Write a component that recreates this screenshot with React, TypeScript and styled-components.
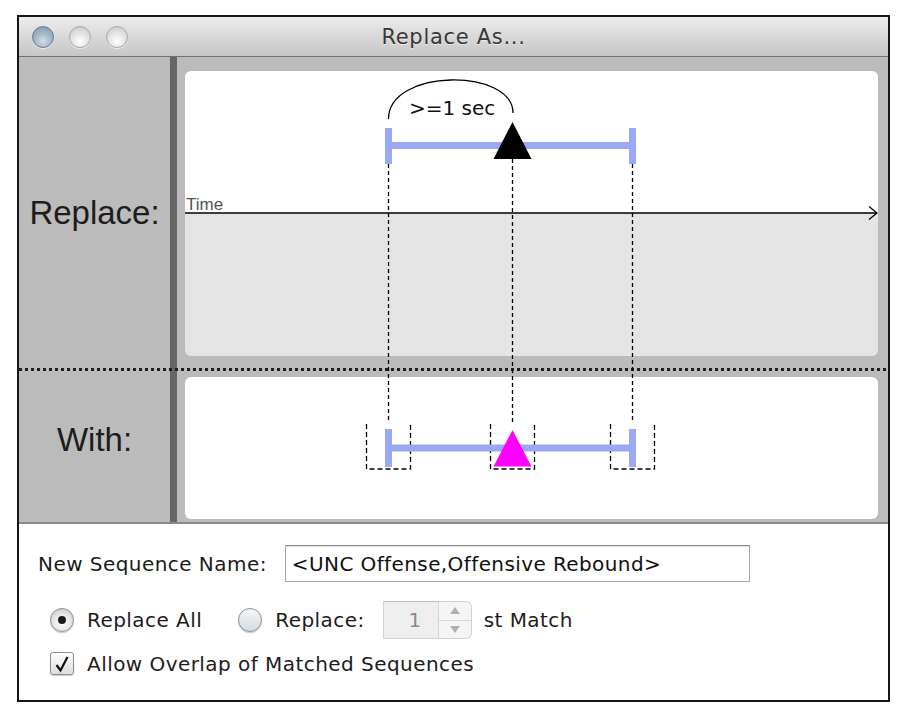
import styled, { createGlobalStyle } from "styled-components";

const GlobalStyle = createGlobalStyle`
  html, body {
    margin: 0;
    padding: 0;
    background: #ffffff;
  }
  body {
    font-family: "DejaVu Sans", "Liberation Sans", sans-serif;
  }
`;

// x positions of the three marks, in card coordinates
const LEFT = 203.5;
const MID = 327.5;
const RIGHT = 447.5;
// cards start 166px right of the main area
const CARD_X = 166;

function App() {
    return (
        <>
            <GlobalStyle />
            <Window>
                <TitleBar>
                    <Lights>
                        <Light $active />
                        <Light />
                        <Light />
                    </Lights>
                    <Title>Replace As...</Title>
                </TitleBar>

                <Main>
                    <SideLabel $shift={6}>Replace:</SideLabel>
                    <Divider />
                    <CardCell $top>
                        <PatternCard>
                            <Drawing>
                                <text x={1} y={139} fontSize={17} fill="#555" fontFamily="Liberation Sans, sans-serif">
                                    Time
                                </text>
                                <line x1={0} y1={142} x2={691} y2={142} stroke="#000" strokeWidth={1.5} />
                                <polyline points="684,135.5 692,142 684,148.5" fill="none" stroke="#000" strokeWidth={1.3} />
                                <path
                                    d={`M ${LEFT} 48 C ${LEFT} -3, 328 -3, 328 42`}
                                    fill="none"
                                    stroke="#000"
                                    strokeWidth={1.3}
                                />
                                <text x={224} y={44} fontSize={20} fill="#111" fontFamily="DejaVu Sans, sans-serif">
                                    &gt;=1 sec
                                </text>
                                <rect x={LEFT} y={71} width={RIGHT - LEFT} height={7} fill="#9aa8f6" />
                                <rect x={LEFT - 3.5} y={57} width={7} height={36} fill="#9aa8f6" />
                                <rect x={RIGHT - 3.5} y={57} width={7} height={36} fill="#9aa8f6" />
                                <polygon points={`${MID},51 ${MID - 19},88 ${MID + 19},88`} fill="#000" />
                            </Drawing>
                        </PatternCard>
                    </CardCell>

                    <Separator />

                    <SideLabel $shift={-16}>With:</SideLabel>
                    <CardCell>
                        <ResultCard>
                            <Drawing>
                                {[LEFT, MID, RIGHT].map((x) => (
                                    <path
                                        key={x}
                                        d={`M ${x - 22} 47 V 92 H ${x + 22} V 47`}
                                        fill="none"
                                        stroke="#000"
                                        strokeWidth={1.3}
                                        strokeDasharray="5 3"
                                    />
                                ))}
                                <rect x={LEFT} y={67.5} width={RIGHT - LEFT} height={7} fill="#9aa8f6" />
                                <rect x={LEFT - 3.5} y={52} width={7} height={38} fill="#9aa8f6" />
                                <rect x={RIGHT - 3.5} y={52} width={7} height={38} fill="#9aa8f6" />
                                <polygon points={`${MID},53 ${MID - 19},89.5 ${MID + 19},89.5`} fill="#ff00ff" />
                            </Drawing>
                        </ResultCard>
                    </CardCell>

                    <Guides>
                        <line x1={CARD_X + LEFT} y1={107} x2={CARD_X + LEFT} y2={363} />
                        <line x1={CARD_X + MID} y1={102} x2={CARD_X + MID} y2={366} />
                        <line x1={CARD_X + RIGHT} y1={107} x2={CARD_X + RIGHT} y2={363} />
                    </Guides>
                </Main>

                <Options>
                    <NameRow>
                        <Text>New Sequence Name:</Text>
                        <NameField readOnly value="<UNC Offense,Offensive Rebound>" />
                    </NameRow>
                    <ControlRow>
                        <Radio $checked />
                        <Text>Replace All</Text>
                        <Radio $gap={36} />
                        <Text>Replace:</Text>
                        <Spinner>
                            <SpinValue>1</SpinValue>
                            <Stepper>
                                <StepHalf>
                                    <svg width="10" height="7" viewBox="0 0 10 7">
                                        <polygon points="5,0 10,7 0,7" fill="#b0b0b0" />
                                    </svg>
                                </StepHalf>
                                <StepHalf $lower>
                                    <svg width="10" height="7" viewBox="0 0 10 7">
                                        <polygon points="0,0 10,0 5,7" fill="#b0b0b0" />
                                    </svg>
                                </StepHalf>
                            </Stepper>
                        </Spinner>
                        <Text>st Match</Text>
                    </ControlRow>
                    <CheckRow>
                        <CheckBox>
                            <svg width="18" height="18" viewBox="0 0 18 18">
                                <path d="M3.5 10 L7.5 15.5 L14.5 2" fill="none" stroke="#111" strokeWidth={2.2} />
                            </svg>
                        </CheckBox>
                        <Text>Allow Overlap of Matched Sequences</Text>
                    </CheckRow>
                </Options>
            </Window>
        </>
    );
}

const Window = styled.div`
    width: 873px;
    height: 687px;
    box-sizing: border-box;
    margin: 15px 0 0 17px;
    border: 2px solid #161616;
    display: flex;
    flex-direction: column;
    background: #fff;
`;

const TitleBar = styled.div`
    height: 39px;
    flex-shrink: 0;
    border-bottom: 1px solid #707070;
    background: linear-gradient(to bottom, #ececec, #c6c6c6);
    display: grid;
    grid-template-columns: 1fr auto 1fr;
    align-items: center;
`;

const Lights = styled.div`
    display: flex;
    gap: 15px;
    padding-left: 13px;
`;

const Light = styled.span<{ $active?: boolean }>`
    width: 22px;
    height: 22px;
    box-sizing: border-box;
    border-radius: 50%;
    border: 1px solid ${(p) => (p.$active ? "#6a7e91" : "#ababab")};
    background: ${(p) =>
        p.$active
            ? "radial-gradient(circle at 50% 70%, #d2dee8 0%, #a5b9ca 45%, #7a91a6 100%)"
            : "radial-gradient(circle at 50% 70%, #ffffff 0%, #e6e6e6 45%, #c2c2c2 100%)"};
    box-shadow: 0 1px 0 rgba(255, 255, 255, 0.6);
`;

const Title = styled.div`
    font-family: "DejaVu Sans", sans-serif;
    font-size: 21px;
    letter-spacing: 0.7px;
    color: #383838;
    text-shadow: 0 1px 0 rgba(255, 255, 255, 0.5);
`;

const Main = styled.div`
    position: relative;
    flex-shrink: 0;
    display: grid;
    grid-template-columns: 151px 7px 1fr;
    grid-template-rows: 306px 11px 148px;
    background: #bbbbbb;
    border-bottom: 2px solid #8a8a8a;
`;

const SideLabel = styled.div<{ $shift: number }>`
    grid-column: 1;
    display: flex;
    align-items: center;
    justify-content: center;
    padding-top: ${(p) => Math.max(p.$shift, 0)}px;
    padding-bottom: ${(p) => Math.max(-p.$shift, 0)}px;
    font-family: "Liberation Sans", Arial, sans-serif;
    font-size: 33px;
    color: #1d1d1d;
`;

const Divider = styled.div`
    grid-column: 2;
    grid-row: 1 / 4;
    background: #666666;
`;

const CardCell = styled.div<{ $top?: boolean }>`
    grid-column: 3;
    padding: ${(p) => (p.$top ? "14px 10px 7px 8px" : "3px 10px 3px 8px")};
    display: flex;
`;

const PatternCard = styled.div`
    flex: 1;
    border-radius: 6px;
    background: linear-gradient(to bottom, #ffffff 142px, #e4e4e4 142px);
    overflow: hidden;
`;

const ResultCard = styled.div`
    flex: 1;
    border-radius: 6px;
    background: #ffffff;
    overflow: hidden;
`;

const Drawing = styled.svg`
    display: block;
    width: 100%;
    height: 100%;
`;

const Separator = styled.div`
    grid-column: 1 / 4;
    grid-row: 2;
    height: 3px;
    margin-top: 5px;
    background-image: repeating-linear-gradient(to right, #1e1e1e 0 3px, transparent 3px 6px);
`;

const Guides = styled.svg`
    position: absolute;
    inset: 0;
    width: 100%;
    height: 100%;
    pointer-events: none;
    line {
        stroke: #000;
        stroke-width: 1.3;
        stroke-dasharray: 4 3;
    }
`;

const Options = styled.div`
    flex: 1;
    padding: 21px 0 0 19px;
    display: flex;
    flex-direction: column;
    font-family: "DejaVu Sans", sans-serif;
    font-size: 20px;
    letter-spacing: 0.45px;
    color: #1c1c1c;
`;

const Text = styled.span`
    white-space: nowrap;
`;

const NameRow = styled.div`
    display: flex;
    align-items: center;
    gap: 18px;
    height: 37px;
`;

const NameField = styled.input`
    width: 465px;
    height: 37px;
    box-sizing: border-box;
    border: 1px solid #a8a8a8;
    border-top-color: #8c8c8c;
    box-shadow: inset 0 1px 1px rgba(0, 0, 0, 0.12);
    padding: 0 6px;
    font-family: "DejaVu Sans", sans-serif;
    font-size: 20px;
    letter-spacing: 0.4px;
    color: #111;
    background: #fff;
    outline: none;
`;

const ControlRow = styled.div`
    display: flex;
    align-items: center;
    height: 38px;
    margin-top: 19px;
    padding-left: 12px;
`;

const Radio = styled.span<{ $checked?: boolean; $gap?: number }>`
    position: relative;
    width: 24px;
    height: 24px;
    box-sizing: border-box;
    border-radius: 50%;
    border: 1px solid #8e8e8e;
    margin-left: ${(p) => p.$gap ?? 0}px;
    margin-right: 13px;
    flex-shrink: 0;
    background: ${(p) =>
        p.$checked
            ? "radial-gradient(circle at 50% 60%, #ffffff 0%, #e6e6e6 50%, #b8b8b8 100%)"
            : "linear-gradient(to bottom, #f3f6fa, #d8dde3)"};
    box-shadow: 0 1px 1px rgba(0, 0, 0, 0.25);

    &::after {
        content: "";
        display: ${(p) => (p.$checked ? "block" : "none")};
        position: absolute;
        left: 50%;
        top: 50%;
        width: 8px;
        height: 8px;
        margin: -4px 0 0 -4px;
        border-radius: 50%;
        background: #1a1a1a;
    }
`;

const Spinner = styled.div`
    display: flex;
    height: 38px;
    margin-left: 18px;
    margin-right: 12px;
`;

const SpinValue = styled.div`
    width: 56px;
    box-sizing: border-box;
    border: 1px solid #d3d3d3;
    border-top-color: #c2c2c2;
    background: #eeeeee;
    color: #8a8a8a;
    display: flex;
    align-items: center;
    justify-content: flex-end;
    padding-right: 16px;
`;

const Stepper = styled.div`
    width: 33px;
    box-sizing: border-box;
    border: 1px solid #d0d0d0;
    border-left: none;
    border-radius: 0 6px 6px 0;
    background: #f5f5f5;
    display: flex;
    flex-direction: column;
    overflow: hidden;
`;

const StepHalf = styled.div<{ $lower?: boolean }>`
    flex: 1;
    display: flex;
    align-items: center;
    justify-content: center;
    border-top: ${(p) => (p.$lower ? "1px solid #d8d8d8" : "none")};
`;

const CheckRow = styled.div`
    display: flex;
    align-items: center;
    gap: 13px;
    height: 23px;
    margin-top: 13px;
    padding-left: 12px;
`;

const CheckBox = styled.span`
    width: 24px;
    height: 23px;
    box-sizing: border-box;
    border: 1px solid #8e8e8e;
    border-radius: 3px;
    background: linear-gradient(to bottom, #ffffff, #dedede);
    box-shadow: 0 1px 1px rgba(0, 0, 0, 0.2);
    display: flex;
    align-items: center;
    justify-content: center;
    flex-shrink: 0;
`;

export default App;
